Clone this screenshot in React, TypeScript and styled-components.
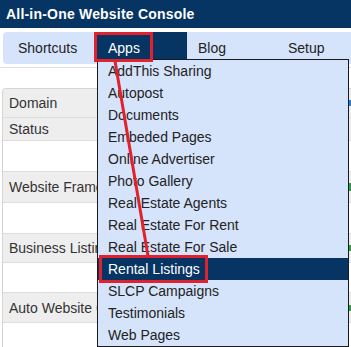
import styled, { createGlobalStyle } from "styled-components";

const GlobalStyle = createGlobalStyle`
  html, body {
    margin: 0;
    padding: 0;
    background: #ffffff;
    font-family: "Liberation Sans", Arial, sans-serif;
    overflow: hidden;
  }
`;

const NAVY = "#063463";
const LIGHT = "#d6e4fb";
const RED = "#e0222e";

const Page = styled.div`
  position: relative;
  width: 351px;
  height: 347px;
  overflow: hidden;
`;

const Header = styled.div`
  height: 28px;
  background: ${NAVY};
  color: #ffffff;
  font-weight: bold;
  font-size: 14px;
  letter-spacing: 0.2px;
  line-height: 28px;
  padding-left: 6px;
`;

const NavBar = styled.div`
  display: flex;
  height: 32px;
  margin: 4px 0 0 3px;
  padding-left: 4px;
  background: ${LIGHT};
  border-radius: 4px 0 0 4px;
`;

const Tab = styled.div<{ $active?: boolean }>`
  position: relative;
  flex: 0 0 90px;
  box-sizing: border-box;
  padding-left: 11px;
  font-size: 14px;
  line-height: 32px;
  color: ${(p) => (p.$active ? "#ffffff" : "#222222")};
  background: ${(p) => (p.$active ? NAVY : "transparent")};
`;

const Menu = styled.ul`
  position: absolute;
  top: 27px;
  left: 0;
  z-index: 5;
  width: 252px;
  box-sizing: border-box;
  margin: 0;
  padding: 0;
  list-style: none;
  background: ${LIGHT};
  border: 1px solid #1a1a1a;
`;

const MenuItem = styled.li<{ $selected?: boolean }>`
  height: 22px;
  line-height: 22px;
  padding-left: 10px;
  font-size: 14px;
  color: ${(p) => (p.$selected ? "#ffffff" : "#222222")};
  background: ${(p) => (p.$selected ? NAVY : "transparent")};
  white-space: nowrap;
`;

const Content = styled.div`
  margin-top: 3px;
  border-top: 1px solid #dddddd;
  padding: 20px 0 0 2px;
`;

const Table = styled.div`
  border-left: 1px solid #d4d4d4;
  border-top: 1px solid #d4d4d4;
  border-radius: 4px 0 0 0;
  overflow: hidden;
`;

const Row = styled.div<{ $gray?: boolean; $h: number }>`
  display: flex;
  align-items: center;
  justify-content: space-between;
  height: ${(p) => p.$h}px;
  padding-left: 6px;
  font-size: 14px;
  color: #333333;
  background: ${(p) => (p.$gray ? "#eeeeee" : "#ffffff")};
  border-bottom: 1px solid #dddddd;
`;

const Tail = styled.span<{ $color: string; $h: number }>`
  width: 2px;
  height: ${(p) => p.$h}px;
  background: ${(p) => p.$color};
`;

const Overlay = styled.svg`
  position: absolute;
  left: 0;
  top: 0;
  z-index: 10;
  pointer-events: none;
`;

const HighlightBox = styled.div<{ $x: number; $y: number; $w: number; $h: number }>`
  position: absolute;
  z-index: 10;
  left: ${(p) => p.$x}px;
  top: ${(p) => p.$y}px;
  width: ${(p) => p.$w}px;
  height: ${(p) => p.$h}px;
  box-sizing: border-box;
  border: 3px solid ${RED};
  pointer-events: none;
`;

const apps = [
  "AddThis Sharing",
  "Autopost",
  "Documents",
  "Embeded Pages",
  "Online Advertiser",
  "Photo Gallery",
  "Real Estate Agents",
  "Real Estate For Rent",
  "Real Estate For Sale",
  "Rental Listings",
  "SLCP Campaigns",
  "Testimonials",
  "Web Pages",
];

const rows: { label: string; gray: boolean; h: number; tail?: [string, number] }[] = [
  { label: "Domain", gray: true, h: 28, tail: ["#2a7fd4", 6] },
  { label: "Status", gray: true, h: 22 },
  { label: "", gray: false, h: 30 },
  { label: "Website Frame", gray: true, h: 30, tail: ["#2e9a4a", 8] },
  { label: "", gray: false, h: 30 },
  { label: "Business Listin", gray: true, h: 28, tail: ["#2e9a4a", 6] },
  { label: "", gray: false, h: 29 },
  { label: "Auto Website C", gray: true, h: 29, tail: ["#2e9a4a", 6] },
  { label: "", gray: false, h: 40 },
];

export default function App() {
  return (
    <Page>
      <GlobalStyle />
      <Header>All-in-One Website Console</Header>
      <NavBar>
        <Tab>Shortcuts</Tab>
        <Tab $active>
          Apps
          <Menu>
            {apps.map((a) => (
              <MenuItem key={a} $selected={a === "Rental Listings"}>
                {a}
              </MenuItem>
            ))}
          </Menu>
        </Tab>
        <Tab>Blog</Tab>
        <Tab>Setup</Tab>
      </NavBar>
      <Content>
        <Table>
          {rows.map((r, i) => (
            <Row key={i} $gray={r.gray} $h={r.h}>
              <span>{r.label}</span>
              {r.tail && <Tail $color={r.tail[0]} $h={r.tail[1]} />}
            </Row>
          ))}
        </Table>
      </Content>
      <HighlightBox $x={94} $y={32} $w={59} $h={30} />
      <HighlightBox $x={99} $y={255} $w={109} $h={28} />
      <Overlay width="351" height="347" viewBox="0 0 351 347">
        <line x1="115" y1="61" x2="148" y2="256" stroke={RED} strokeWidth="3" />
      </Overlay>
    </Page>
  );
}
